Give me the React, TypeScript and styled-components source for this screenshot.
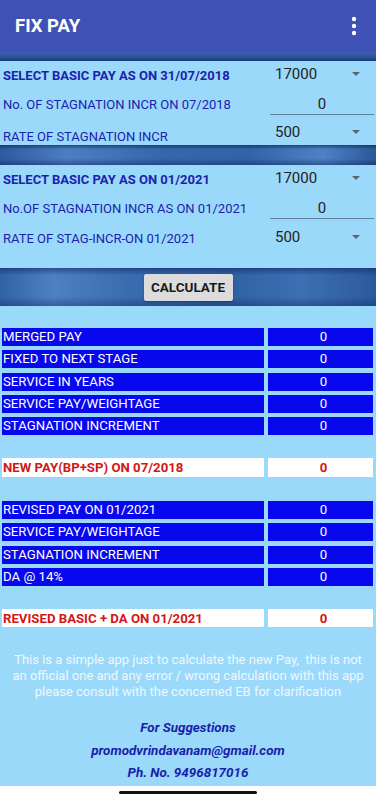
import React from "react";
import styled, { createGlobalStyle, css } from "styled-components";

const GlobalStyle = createGlobalStyle`
  html, body {
    margin: 0;
    padding: 0;
    background: #ffffff;
  }
  body {
    font-family: Roboto, "Noto Sans", "Liberation Sans", Arial, sans-serif;
  }
  * {
    box-sizing: border-box;
  }
`;

interface FieldProps {
    label: string;
    bold?: boolean;
    kind: "spinner" | "input";
    value: string;
    height: number;
    align?: "center" | "end";
}

interface ResultProps {
    label: string;
    value: string;
}

const firstBlock: FieldProps[] = [
    {label: "SELECT BASIC PAY AS ON 31/07/2018", bold: true, kind: "spinner", value: "17000", height: 28},
    {label: "No. OF STAGNATION INCR ON 07/2018", kind: "input", value: "0", height: 30},
    {label: "RATE OF STAGNATION INCR", kind: "spinner", value: "500", height: 26, align: "end"},
];

const secondBlock: FieldProps[] = [
    {label: "SELECT BASIC PAY AS ON 01/2021", bold: true, kind: "spinner", value: "17000", height: 28},
    {label: "No.OF STAGNATION INCR AS ON 01/2021", kind: "input", value: "0", height: 30},
    {label: "RATE OF STAG-INCR-ON 01/2021", kind: "spinner", value: "500", height: 30},
];

const oldPayRows: ResultProps[] = [
    {label: "MERGED PAY", value: "0"},
    {label: "FIXED TO NEXT STAGE", value: "0"},
    {label: "SERVICE IN YEARS", value: "0"},
    {label: "SERVICE PAY/WEIGHTAGE", value: "0"},
    {label: "STAGNATION INCREMENT", value: "0"},
];

const revisedRows: ResultProps[] = [
    {label: "REVISED PAY ON 01/2021", value: "0"},
    {label: "SERVICE PAY/WEIGHTAGE", value: "0"},
    {label: "STAGNATION INCREMENT", value: "0"},
    {label: "DA @ 14%", value: "0"},
];

const Field: React.FC<FieldProps> = ({label, bold, kind, value, height, align}) => {
    return (
        <FieldRow $height={height} $align={align || "center"}>
            <FieldLabel $bold={bold}>{label}</FieldLabel>
            {kind === "spinner" ? (
                <Spinner>
                    <span>{value}</span>
                    <Arrow/>
                </Spinner>
            ) : (
                <NumberInput readOnly value={value}/>
            )}
        </FieldRow>
    )
}

const App: React.FC = () => {
    return (
        <>
            <GlobalStyle/>
            <Screen>
                <AppBar>
                    <h1>FIX PAY</h1>
                    <svg width="6" height="20" viewBox="0 0 6 20">
                        <circle cx="3" cy="3" r="2.2" fill="#fff"/>
                        <circle cx="3" cy="10" r="2.2" fill="#fff"/>
                        <circle cx="3" cy="17" r="2.2" fill="#fff"/>
                    </svg>
                </AppBar>

                <Wave $height={9} $top/>
                <InputPanel>
                    {firstBlock.map((f) => <Field key={f.label} {...f}/>)}
                </InputPanel>

                <Wave $height={20}/>
                <InputPanel $bottomSpace={15}>
                    {secondBlock.map((f) => <Field key={f.label} {...f}/>)}
                </InputPanel>

                <ButtonBand>
                    <CalcButton>CALCULATE</CalcButton>
                </ButtonBand>

                <Results>
                    <ResultGrid>
                        {oldPayRows.map((r) => (
                            <React.Fragment key={r.label}>
                                <Cell>{r.label}</Cell>
                                <Cell $center>{r.value}</Cell>
                            </React.Fragment>
                        ))}
                    </ResultGrid>

                    <ResultGrid $top={23} $rowHeight={19}>
                        <Cell $total>NEW PAY(BP+SP) ON 07/2018</Cell>
                        <Cell $total $center>0</Cell>
                    </ResultGrid>

                    <ResultGrid $top={24}>
                        {revisedRows.map((r) => (
                            <React.Fragment key={r.label}>
                                <Cell>{r.label}</Cell>
                                <Cell $center>{r.value}</Cell>
                            </React.Fragment>
                        ))}
                    </ResultGrid>

                    <ResultGrid $top={23}>
                        <Cell $total>REVISED BASIC + DA ON 01/2021</Cell>
                        <Cell $total $center>0</Cell>
                    </ResultGrid>

                    <Disclaimer>
                        This is a simple app just to calculate the new Pay,&nbsp; this is not
                        an official one and any error / wrong calculation with this app
                        please consult with the concerned EB for clarification
                    </Disclaimer>

                    <Contact>
                        <div>For Suggestions</div>
                        <div>promodvrindavanam@gmail.com</div>
                        <div>Ph. No. 9496817016</div>
                    </Contact>
                </Results>

                <NavBar>
                    <div className={"handle"}/>
                </NavBar>
            </Screen>
        </>
    )
}

export default App;


const panelBlue = "#9bd9fb";
const labelBlue = "#1c22ad";

const Screen = styled.div`
  width: 376px;
  height: 800px;
  display: flex;
  flex-direction: column;
  overflow: hidden;
  background: #ffffff;
`;

const AppBar = styled.header`
  height: 52px;
  flex-shrink: 0;
  background: #3f51b5;
  display: flex;
  align-items: center;
  justify-content: space-between;
  padding: 0 19px 0 15px;

  h1 {
    margin: 0;
    color: #ffffff;
    font-size: 18.5px;
    font-weight: 700;
  }
`;

const Wave = styled.div<{ $height: number; $top?: boolean }>`
  height: ${p => p.$height}px;
  flex-shrink: 0;
  ${p => p.$top ? css`
    background: linear-gradient(180deg, #4160b4 0%, #2c57a0 45%, #173b7b 100%);
  ` : css`
    background:
      linear-gradient(180deg, rgba(12, 32, 84, 0.6) 0%, rgba(255, 255, 255, 0) 22%, rgba(255, 255, 255, 0) 68%, rgba(12, 32, 84, 0.45) 100%),
      linear-gradient(90deg, #2c5a9d 0%, #4d7ec1 18%, #3567ac 42%, #3063a7 66%, #4d82c3 86%, #2a5899 100%);
  `}
`;

const InputPanel = styled.section<{ $bottomSpace?: number }>`
  flex-shrink: 0;
  background: ${panelBlue};
  padding-bottom: ${p => p.$bottomSpace || 0}px;
`;

const FieldRow = styled.div<{ $height: number; $align: "center" | "end" }>`
  height: ${p => p.$height}px;
  display: grid;
  grid-template-columns: 270px 1fr;
  align-items: ${p => p.$align === "end" ? "end" : "center"};
  padding-bottom: ${p => p.$align === "end" ? 1 : 0}px;
`;

const FieldLabel = styled.span<{ $bold?: boolean }>`
  padding-left: 3px;
  color: ${labelBlue};
  font-size: 13px;
  font-weight: ${p => p.$bold ? 700 : 400};
  white-space: nowrap;
`;

const Spinner = styled.div`
  display: flex;
  align-items: center;
  justify-content: space-between;
  padding: 0 16px 3px 5px;
  color: #222222;
  font-size: 15px;
`;

const Arrow = styled.span`
  width: 0;
  height: 0;
  border-left: 4.5px solid transparent;
  border-right: 4.5px solid transparent;
  border-top: 4.5px solid #5a6570;
`;

const NumberInput = styled.input`
  width: 104px;
  height: 22px;
  margin: 0;
  padding: 0;
  border: none;
  border-bottom: 1px solid #5f7e97;
  background: transparent;
  outline: none;
  text-align: center;
  font-family: inherit;
  font-size: 15px;
  color: #222222;
`;

const ButtonBand = styled.div`
  height: 38px;
  flex-shrink: 0;
  display: flex;
  align-items: center;
  justify-content: center;
  background:
    linear-gradient(180deg, rgba(12, 32, 84, 0.5) 0%, rgba(255, 255, 255, 0) 20%, rgba(255, 255, 255, 0) 75%, rgba(12, 32, 84, 0.35) 100%),
    linear-gradient(90deg, #3162a6 0%, #4f80c2 14%, #3a6bb0 35%, #2f60a4 60%, #3d6fb4 80%, #2b5a9c 100%);
`;

const CalcButton = styled.button`
  width: 89px;
  height: 27px;
  border: none;
  border-radius: 2px;
  background: #dcdcdc;
  box-shadow: 0 1px 2px rgba(0, 0, 0, 0.3);
  color: #1a1a1a;
  font-family: inherit;
  font-size: 13.5px;
  font-weight: 700;
  padding: 0;
`;

const Results = styled.main`
  flex: 1;
  background: ${panelBlue};
  padding: 22px 2px 0;
`;

const ResultGrid = styled.div<{ $top?: number; $rowHeight?: number }>`
  display: grid;
  grid-template-columns: 262px 105px;
  grid-auto-rows: ${p => p.$rowHeight || 18}px;
  column-gap: 4px;
  row-gap: 4.3px;
  margin-top: ${p => p.$top || 0}px;
`;

const Cell = styled.div<{ $total?: boolean; $center?: boolean }>`
  background: ${p => p.$total ? "#ffffff" : "#0808ee"};
  color: ${p => p.$total ? "#d01818" : "#ffffff"};
  font-size: 13.2px;
  font-weight: ${p => p.$total ? 700 : 400};
  line-height: ${p => p.$total ? 19 : 18}px;
  padding-left: ${p => p.$center ? 6 : 1}px;
  text-align: ${p => p.$center ? "center" : "left"};
  white-space: nowrap;
  overflow: hidden;
`;

const Disclaimer = styled.p`
  margin: 25px 0 0;
  padding: 0 4px;
  color: #eef7fd;
  font-size: 13px;
  line-height: 16px;
  text-align: center;
`;

const Contact = styled.div`
  margin-top: 17px;
  color: #1a1eaa;
  font-size: 13.4px;
  font-weight: 700;
  font-style: italic;
  line-height: 22.5px;
  text-align: center;
`;

const NavBar = styled.div`
  height: 14px;
  flex-shrink: 0;
  background: #ffffff;
  display: flex;
  justify-content: center;
  padding-top: 5px;

  .handle {
    width: 138px;
    height: 3px;
    border-radius: 2px;
    background: #111111;
  }
`;
